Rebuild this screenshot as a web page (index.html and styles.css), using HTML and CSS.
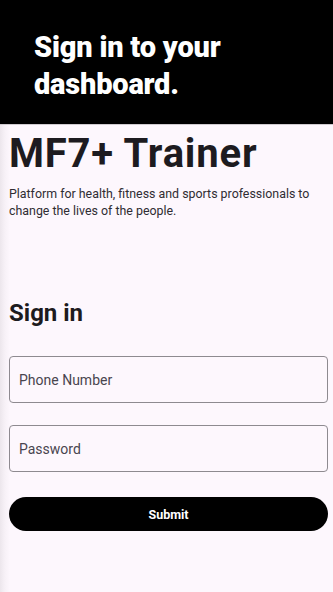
FILE: index.html
```html
<!DOCTYPE html>
<html lang="en">
<head>
<meta charset="utf-8">
<meta name="viewport" content="width=device-width, initial-scale=1">
<title>Sign in</title>
<link rel="stylesheet" href="styles.css">
</head>
<body>
<header class="hero">
  <h1 class="hero-title">Sign in to your dashboard.</h1>
</header>
<main class="content">
  <h2 class="brand">MF7+ Trainer</h2>
  <p class="tagline">Platform for health, fitness and sports professionals to change the lives of the people.</p>
  <h3 class="section-title">Sign in</h3>
  <form class="form">
    <label class="field"><input class="input" type="tel" placeholder="Phone Number"></label>
    <label class="field"><input class="input" type="password" placeholder="Password"></label>
    <button class="submit" type="button">Submit</button>
  </form>
</main>
</body>
</html>
```

FILE: styles.css
```css
* { box-sizing: border-box; }
html, body { height: 100%; }
body {
  margin: 0;
  font-family: Roboto, "Noto Sans", sans-serif;
  background: linear-gradient(to right, #ece6ec 0, #f7f1f7 5px, #fdf7fd 10px);
  color: #1d1b20;
}
.hero {
  background: #000;
  padding: 29px 20px 21px 34px;
  border-bottom: 1px solid #cfcacf;
}
.hero-title {
  margin: 0;
  color: #fff;
  font-size: 29px;
  line-height: 37px;
  font-weight: 900;
  letter-spacing: -0.2px;
  width: 200px;
}
.content {
  padding: 5px 5px 0 9px;
}
.brand {
  margin: 0;
  font-size: 40px;
  line-height: 48px;
  font-weight: 700;
  letter-spacing: 0.8px;
  color: #1d1b20;
}
.tagline {
  margin: 7px 0 0;
  font-size: 12.4px;
  line-height: 17px;
  color: #302d33;
}
.section-title {
  margin: 78px 0 0;
  font-size: 24px;
  line-height: 32px;
  font-weight: 700;
}
.form {
  display: flex;
  flex-direction: column;
  margin-top: 27px;
}
.field { display: block; }
.field + .field { margin-top: 22px; }
.input {
  display: block;
  width: 100%;
  height: 47px;
  border: 1px solid #8e8a90;
  border-radius: 4px;
  background: transparent;
  padding: 0 9px;
  font-family: Roboto, sans-serif;
  font-size: 14px;
  color: #1d1b20;
}
.input::placeholder { color: #49454f; }
.submit {
  margin-top: 25px;
  height: 34px;
  border: none;
  border-radius: 17px;
  background: #000;
  color: #fff;
  font-family: Roboto, sans-serif;
  font-weight: 700;
  font-size: 12.5px;
}
```
